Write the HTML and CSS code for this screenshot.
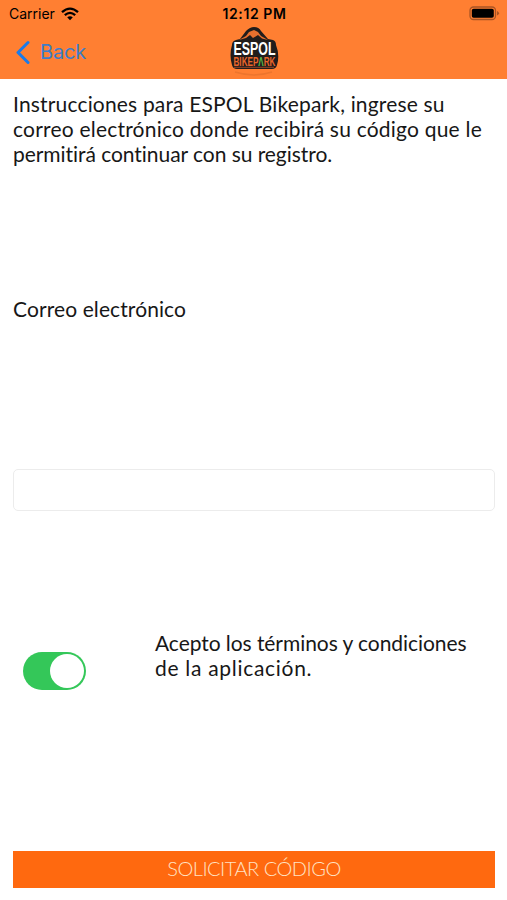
FILE: index.html
```html
<!DOCTYPE html>
<html lang="es">
<head>
    <meta charset="UTF-8">
    <meta name="viewport" content="width=device-width, initial-scale=1.0">
    <title>ESPOL Bikepark</title>
    <link rel="stylesheet" href="styles.css">
</head>
<body>

    <header class="header">
        <div class="status-bar">
            <div class="carrier">
                <span>Carrier</span>
                <svg width="18" height="14" viewBox="0 0 18 14" fill="none" stroke="#000" stroke-width="2.3">
                    <path d="M1 5.2 Q9 -2 17 5.2"/>
                    <path d="M3.8 8.2 Q9 3.6 14.2 8.2"/>
                    <path d="M6.2 10.3 Q9 8 11.8 10.3 L9 13.3 Z" fill="#000" stroke="none"/>
                </svg>
            </div>
            <span class="time">12:12 PM</span>
            <svg class="battery" width="31" height="15" viewBox="0 0 31 15">
                <rect x="1" y="1" width="25.5" height="12.5" rx="3.5" fill="none" stroke="#a95424" stroke-width="1.3"/>
                <rect x="2.8" y="2.8" width="22" height="9" rx="1.8" fill="#000"/>
                <path d="M28 5 Q32 7.2 28 9.5 Z" fill="#a95424"/>
            </svg>
        </div>
        <nav class="nav-bar">
            <a class="back" href="#">
                <svg width="16" height="25" viewBox="0 0 16 25" fill="none" stroke="#1b7bea" stroke-width="3" stroke-linecap="round" stroke-linejoin="round">
                    <path d="M14 2.5 L4 12.5 L14 22.5"/>
                </svg>
                <span>Back</span>
            </a>
            <svg class="logo" width="50" height="50" viewBox="0 0 50 50">
                <path d="M3 18 Q3 14 7 13 L11 12 L17 4 Q21 0 25 0 Q30 0 32 4 L39 12 L44 13 Q47 14 47 18 Q51 28 48 38 Q47 42 43 42 L8 42 Q4 42 3 38 Q0 28 3 18 Z" fill="#211d1c"/>
                <path d="M10 13 L17 9 L20 5 L25 3 L29 5 L32 9 L39 13 L33 11.5 L29 8 L24 11 L21 8 L17 11 Z" fill="#e8702e"/>
                <text class="logo-name" x="4.5" y="28" textLength="42" lengthAdjust="spacingAndGlyphs">ESPOL</text>
                <text class="logo-park" x="4.5" y="38.5" textLength="42" lengthAdjust="spacingAndGlyphs">BIKEP<tspan class="logo-leaf">Λ</tspan>RK</text>
                <path d="M5 40.3 H45" stroke="#b6532c" stroke-width="0.8"/>
                <path d="M6 45 Q25 51 43 45" fill="none" stroke="#ed752d" stroke-width="1.5"/>
            </svg>
        </nav>
    </header>

    <main class="content">
        <p class="instructions">Instrucciones para ESPOL Bikepark, ingrese su<br><span class="wide">correo electrónico donde recibirá su código que le</span><br><span class="tight">permitirá continuar con su registro.</span></p>
        <label class="email-label" for="email">Correo electrónico</label>
        <input class="email" type="email" id="email">
        <div class="terms">
            <div class="switch"><div class="knob"></div></div>
            <p class="terms-text">Acepto los términos y condiciones<br><span class="loose">de la aplicación.</span></p>
        </div>
        <button class="submit">SOLICITAR CÓDIGO</button>
    </main>

</body>
</html>
```

FILE: styles.css
```css
* {
    box-sizing: border-box;
}
body {
    margin: 0;
    height: 900px;
    background: white;
    color: #171717;
    font-family: Lato, sans-serif;
    font-size: 21px;
    font-variant-ligatures: none;
    line-height: 25px;
}
p {
    margin: 0;
}
.header {
    height: 79px;
    background-color: #ff7f32;
    color: black;
    font-family: Inter, sans-serif;
}
.status-bar {
    display: grid;
    grid-template-columns: 1fr auto 1fr;
    align-items: center;
    height: 27px;
    padding: 0 7px 0 9px;
    font-size: 14px;
}
.carrier {
    display: flex;
    align-items: center;
    gap: 6px;
}
.time {
    font-weight: 600;
    letter-spacing: 0.6px;
}
.battery {
    justify-self: end;
}
.nav-bar {
    display: grid;
    grid-template-columns: 1fr auto 1fr;
    height: 52px;
    padding: 0 14px;
}
.back {
    display: flex;
    align-items: center;
    gap: 10px;
    height: 51px;
    color: #3d7dc8;
    font-size: 20px;
    letter-spacing: -0.2px;
    text-decoration: none;
}
.logo-name {
    fill: white;
    font: bold 18.5px/1 "Liberation Sans", sans-serif;
}
.logo-park {
    fill: #e8652a;
    font: bold 12.5px/1 "Liberation Sans", sans-serif;
}
.logo-leaf {
    fill: #58b947;
}
.content {
    display: flex;
    flex-direction: column;
    padding: 12px 12px 0 13px;
}
.instructions {
    height: 205px;
    letter-spacing: 0.17px;
    white-space: nowrap;
}
.wide {
    letter-spacing: 0.21px;
}
.tight {
    letter-spacing: -0.05px;
}
.email-label {
    height: 173px;
    letter-spacing: 0.1px;
}
.email {
    height: 42px;
    border: 1px solid #ececec;
    border-radius: 5px;
    background: white;
    font: inherit;
}
.terms {
    display: flex;
    height: 221px;
    margin-top: 119px;
    padding-left: 10px;
}
.switch {
    width: 63px;
    height: 38px;
    margin: 22px 69px 0 0;
    padding: 2px;
    border-radius: 19px;
    background-color: #34c759;
}
.knob {
    width: 34px;
    height: 34px;
    margin-left: auto;
    border-radius: 50%;
    background-color: white;
}
.terms-text {
    letter-spacing: -0.06px;
    white-space: nowrap;
}
.loose {
    letter-spacing: 0.7px;
}
.submit {
    height: 37px;
    padding: 0 0 3px;
    border: none;
    background-color: #ff690f;
    color: #ffe3c4;
    font: 300 20px Lato, sans-serif;
    letter-spacing: -0.5px;
}
```
